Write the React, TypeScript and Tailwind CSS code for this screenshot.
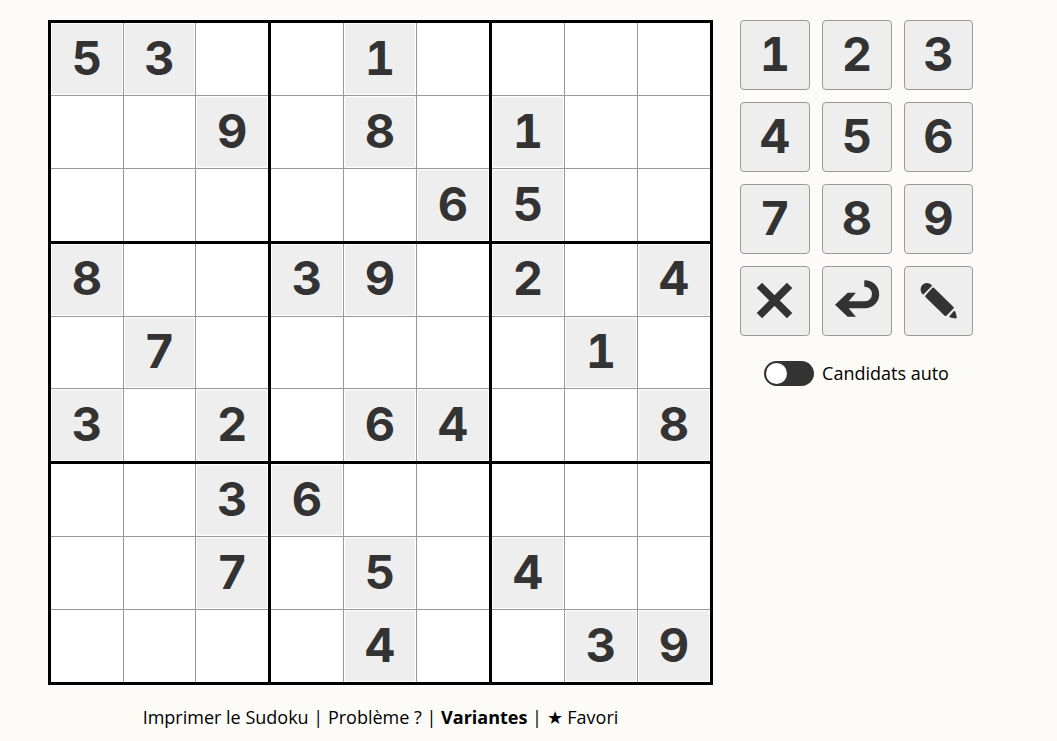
import { useState } from 'react';

const PUZZLE = [
  '53..1....',
  '..9.8.1..',
  '.....65..',
  '8..39.2.4',
  '.7.....1.',
  '3.2.64..8',
  '..36.....',
  '..7.5.4..',
  '....4..39',
];

const DIGITS = ['1', '2', '3', '4', '5', '6', '7', '8', '9'];
const THIRDS = [0, 1, 2];

const digitFont =
  "pb-1 font-[Inter,'Noto_Sans',sans-serif] text-[47px] leading-none font-bold text-[#333] tabular-nums";
const keyClass =
  'flex h-[70px] items-center justify-center rounded border border-[#999] bg-[#eee] text-[#333]';

function CrossIcon() {
  return (
    <svg viewBox="0 0 48 48" className="size-12 shrink-0" fill="none" stroke="currentColor" strokeWidth="7.6" aria-hidden="true">
      <path d="M8.4 8.4 38.6 38.6M38.6 8.4 8.4 38.6" />
    </svg>
  );
}

function UndoIcon() {
  return (
    <svg viewBox="0 0 48 48" className="size-12 shrink-0" fill="currentColor" aria-hidden="true">
      <path d="M2 27.7 14.7 15.7H22.9L15.7 24.3H32A7.3 7.3 0 0 0 31.3 9.7V3.3A14 14 0 0 1 33 31.3H15.7L22.9 39.7H14.7Z" />
    </svg>
  );
}

function PencilIcon() {
  return (
    <svg viewBox="0.8 0.5 48 48" className="size-12 shrink-0" fill="currentColor" aria-hidden="true">
      <path d="M18 9.2 9 18.2A6.7 6.7 0 0 1 8 8.4 6.7 6.7 0 0 1 18 9.2Z" />
      <path d="M19.9 11.4 39.1 30.2Q40.1 31.2 39.1 32.2L32.4 39.1Q31.3 40.1 30.2 39.1L11.4 20.8Q10.5 19.8 11.4 18.8L17.8 11.7Q18.8 10.6 19.9 11.4Z" />
      <path d="M39.4 34.7Q40.6 34 41.1 35L42.6 40.6Q42.6 42 41.3 42L36 41Q34.7 40.4 35.4 39.4Z" />
    </svg>
  );
}

function Board() {
  return (
    <div
      role="grid"
      aria-label="Sudoku"
      className="grid aspect-square w-full grid-cols-[217fr_218fr_218fr] grid-rows-[218fr_217fr_218fr] gap-[3px] border-3 border-black bg-black"
    >
      {THIRDS.map((boxRow) =>
        THIRDS.map((boxCol) => (
          <div key={`${boxRow}${boxCol}`} className="grid grid-cols-3 grid-rows-3 gap-px bg-[#999]">
            {THIRDS.map((r) =>
              THIRDS.map((c) => {
                const value = PUZZLE[boxRow * 3 + r][boxCol * 3 + c];
                const given = value !== '.';
                return (
                  <button key={`${r}${c}`} type="button" role="gridcell" className="flex min-h-0 bg-white p-px">
                    <span
                      className={`flex size-full items-center justify-center ${digitFont} ${given ? 'bg-[#eee]' : ''}`}
                    >
                      {given ? value : ''}
                    </span>
                  </button>
                );
              }),
            )}
          </div>
        )),
      )}
    </div>
  );
}

export default function App() {
  const [auto, setAuto] = useState(false);
  return (
    <div className="min-h-screen bg-[#fcfbf7] font-['Open_Sans','Noto_Sans',sans-serif] text-lg text-black">
      <div className="flex items-start gap-[27px] px-12 pt-5">
        <main className="max-w-[665px] min-w-0 flex-1">
          <Board />
          <nav className="mt-[18px] text-center leading-7">
            <a href="#imprimer">Imprimer le Sudoku</a> | <a href="#probleme">Problème ?</a> |{' '}
            <a href="#variantes" className="font-bold">Variantes</a> | <a href="#favori">★ Favori</a>
          </nav>
        </main>
        <aside className="w-[233px] shrink-0">
          <div className="grid grid-cols-[70fr_70fr_69fr] gap-3">
            {DIGITS.map((d) => (
              <button key={d} type="button" className={`${keyClass} ${digitFont}`}>
                {d}
              </button>
            ))}
            <button type="button" aria-label="Effacer" className={keyClass}>
              <CrossIcon />
            </button>
            <button type="button" aria-label="Annuler" className={keyClass}>
              <UndoIcon />
            </button>
            <button type="button" aria-label="Crayon" className={keyClass}>
              <PencilIcon />
            </button>
          </div>
          <label className="mt-[23px] flex items-center justify-center gap-2 leading-7">
            <input
              type="checkbox"
              checked={auto}
              onChange={(e) => setAuto(e.target.checked)}
              className="h-[25px] w-[50px] shrink-0 appearance-none rounded-full bg-[#333] p-[2px] before:block before:size-[21px] before:rounded-full before:bg-white checked:before:ml-auto"
            />
            Candidats auto
          </label>
        </aside>
      </div>
    </div>
  );
}
